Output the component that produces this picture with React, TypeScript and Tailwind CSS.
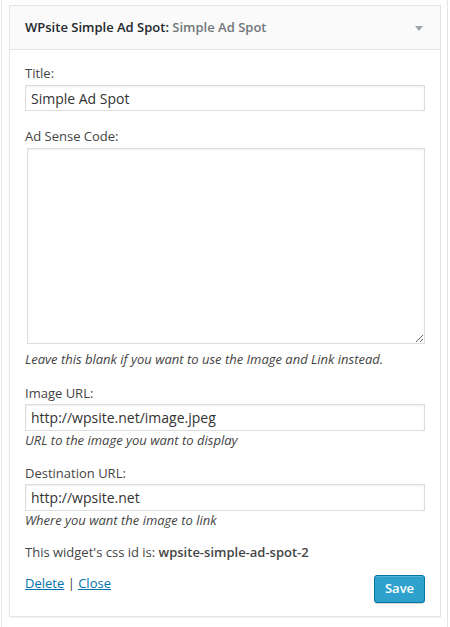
import React from "react";

const font = { fontFamily: '"Open Sans", "Noto Sans", sans-serif' };

export default function App() {
  return (
    <div className="w-[450px] h-[627px] bg-white relative" style={font}>
      <div className="absolute left-[1px] top-0 bottom-0 w-px bg-[#e5e5e5]" />
      <div className="absolute left-[447px] top-0 bottom-0 w-px bg-[#e5e5e5]" />
      <div className="pt-[5px] pl-[9px] pr-[9px]">
        <div className="border border-[#e5e5e5] bg-white shadow-[0_1px_1px_rgba(0,0,0,0.04)]">
          <div className="h-[44px] bg-[#fafafa] border-b border-[#e5e5e5] flex items-center pl-[15px] pr-[17px]">
            <div className="text-[13px] font-semibold text-[#23282d] flex-1">
              WPsite Simple Ad Spot:<span className="text-[#72777c]"> Simple Ad Spot</span>
            </div>
            <svg width="8" height="5" viewBox="0 0 8 5" className="mt-[1px]">
              <path d="M0 0 L8 0 L4 5 Z" fill="#a0a5aa" />
            </svg>
          </div>
          <div className="px-[15px] pt-[14px] text-[13px] text-[#444]">
            <div className="leading-[18px]">Title:</div>
            <input
              readOnly
              value="Simple Ad Spot"
              className="mt-[3px] block w-full h-[26px] border border-[#ddd] px-[5px] text-[14px] text-[#333] shadow-[inset_0_1px_2px_rgba(0,0,0,0.07)] outline-none"
              style={font}
            />
            <div className="mt-[16px] leading-[18px]">Ad Sense Code:</div>
            <textarea
              readOnly
              className="mt-[3px] ml-[2px] block w-[398px] h-[196px] border border-[#ddd] shadow-[inset_0_1px_2px_rgba(0,0,0,0.07)] outline-none"
            />
            <div className="mt-[6px] italic leading-[18px]">Leave this blank if you want to use the Image and Link instead.</div>
            <div className="mt-[16px] leading-[18px]">Image URL:</div>
            <input
              readOnly
              value="http://wpsite.net/image.jpeg"
              className="mt-[2px] block w-full h-[27px] border border-[#ddd] px-[5px] text-[14px] text-[#333] shadow-[inset_0_1px_2px_rgba(0,0,0,0.07)] outline-none"
              style={font}
            />
            <div className="italic leading-[18px]">URL to the image you want to display</div>
            <div className="mt-[15px] leading-[18px]">Destination URL:</div>
            <input
              readOnly
              value="http://wpsite.net"
              className="mt-[2px] block w-full h-[27px] border border-[#ddd] px-[5px] text-[14px] text-[#333] shadow-[inset_0_1px_2px_rgba(0,0,0,0.07)] outline-none"
              style={font}
            />
            <div className="italic leading-[18px]">Where you want the image to link</div>
            <div className="mt-[14px] leading-[18px]">
              This widget's css id is: <span className="font-semibold">wpsite-simple-ad-spot-2</span>
            </div>
            <div className="mt-[13px] flex items-start justify-between pb-[13px]">
              <div className="leading-[18px]">
                <a className="text-[#0073aa] underline">Delete</a> | <a className="text-[#0073aa] underline">Close</a>
              </div>
              <button className="mt-[1px] h-[28px] w-[51px] rounded-[3px] bg-[#2ea2cc] border border-[#0074a2] text-white text-[13px] font-semibold shadow-[inset_0_1px_0_rgba(120,200,230,0.5),0_1px_0_rgba(0,0,0,0.15)]">
                Save
              </button>
            </div>
          </div>
        </div>
      </div>
    </div>
  );
}
